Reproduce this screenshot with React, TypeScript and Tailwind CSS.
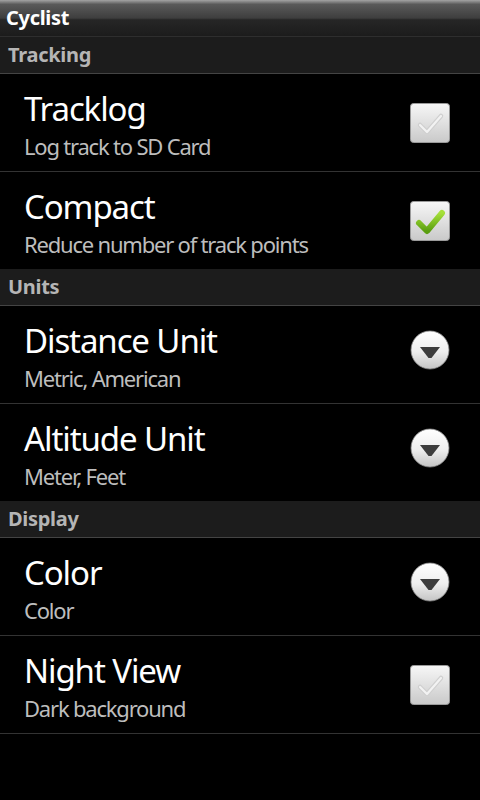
import React from 'react';

type Pref =
  | { kind: 'check'; title: string; summary: string; checked: boolean }
  | { kind: 'list'; title: string; summary: string };

const sections: { name: string; items: Pref[] }[] = [
  {
    name: 'Tracking',
    items: [
      { kind: 'check', title: 'Tracklog', summary: 'Log track to SD Card', checked: false },
      { kind: 'check', title: 'Compact', summary: 'Reduce number of track points', checked: true },
    ],
  },
  {
    name: 'Units',
    items: [
      { kind: 'list', title: 'Distance Unit', summary: 'Metric, American' },
      { kind: 'list', title: 'Altitude Unit', summary: 'Meter, Feet' },
    ],
  },
  {
    name: 'Display',
    items: [
      { kind: 'list', title: 'Color', summary: 'Color' },
      { kind: 'check', title: 'Night View', summary: 'Dark background', checked: false },
    ],
  },
];

function CheckBox({ checked }: { checked: boolean }) {
  return (
    <svg width="40" height="40" viewBox="0 0 40 40">
      <defs>
        <linearGradient id="cbg" x1="0" y1="0" x2="0" y2="1">
          <stop offset="0" stopColor="#f7f7f7" />
          <stop offset="1" stopColor="#c9c9c9" />
        </linearGradient>
        <linearGradient id="grn" x1="0" y1="0" x2="0" y2="1">
          <stop offset="0" stopColor="#a6e03a" />
          <stop offset="1" stopColor="#5a9e10" />
        </linearGradient>
      </defs>
      <rect x="0.5" y="0.5" width="39" height="39" rx="3" fill="url(#cbg)" stroke="#9a9a9a" />
      {checked ? (
        <path
          d="M9 22 L17 30 L32 12"
          fill="none"
          stroke="url(#grn)"
          strokeWidth="6"
          strokeLinecap="round"
          strokeLinejoin="round"
        />
      ) : (
        <>
          <path
            d="M10 22 L17 29 L31 13"
            fill="none"
            stroke="#cfcfcf"
            strokeWidth="4.5"
            strokeLinecap="round"
            strokeLinejoin="round"
          />
          <path
            d="M10 22 L17 29 L31 13"
            fill="none"
            stroke="#f2f2f2"
            strokeWidth="2.2"
            strokeLinecap="round"
            strokeLinejoin="round"
          />
        </>
      )}
    </svg>
  );
}

function Spinner() {
  return (
    <svg width="40" height="40" viewBox="0 0 40 40">
      <defs>
        <linearGradient id="spg" x1="0" y1="0" x2="0" y2="1">
          <stop offset="0" stopColor="#ffffff" />
          <stop offset="0.55" stopColor="#eeeeee" />
          <stop offset="1" stopColor="#c4c4c4" />
        </linearGradient>
      </defs>
      <circle cx="20" cy="20" r="19" fill="url(#spg)" stroke="#8a8a8a" strokeWidth="0.8" />
      <path d="M10 17 L30 17 L21.5 28 L18.5 28 Z" fill="#3d3d3d" />
    </svg>
  );
}

export default function App() {
  return (
    <div
      className="w-[480px] h-[800px] bg-black text-white overflow-hidden"
      style={{ fontFamily: '"Noto Sans", "Open Sans", "DejaVu Sans", sans-serif' }}
    >
      {/* title bar */}
      <div className="h-[37px] flex items-center px-[6px] border-b border-[#2e2e2e] bg-[linear-gradient(#a4a4a4_0%,#5a5a5a_12%,#3e3e3e_50%,#262626_55%,#1c1c1c_100%)]">
        <span className="text-[20px] font-bold leading-none tracking-[-0.3px]">Cyclist</span>
      </div>

      {sections.map((s) => (
        <div key={s.name}>
          <div className="h-[37px] flex items-center px-[8px] bg-[#1c1c1c] border-b border-[#444]">
            <span className="text-[20px] font-bold text-[#b5b5b5] leading-none tracking-[-0.3px]">{s.name}</span>
          </div>
          {s.items.map((p, i) => {
            const divided = i < s.items.length - 1 || s.name === 'Display';
            return (
              <div
                key={p.title}
                className={`flex items-center pl-[24px] pr-[30px] ${
                  divided ? 'h-[98px] border-b border-[#333]' : 'h-[97px]'
                }`}
              >
                <div className="flex-1 flex flex-col mt-[3px]">
                  <span className="text-[33px] leading-[40px] tracking-[-1.1px] text-white">{p.title}</span>
                  <span className="text-[22px] leading-[28px] tracking-[-1.2px] mt-[3px] text-[#bdbdbd]">{p.summary}</span>
                </div>
                {p.kind === 'check' ? (
                  <CheckBox checked={p.checked} />
                ) : (
                  <div className="mb-[10px]">
                    <Spinner />
                  </div>
                )}
              </div>
            );
          })}
        </div>
      ))}
    </div>
  );
}
